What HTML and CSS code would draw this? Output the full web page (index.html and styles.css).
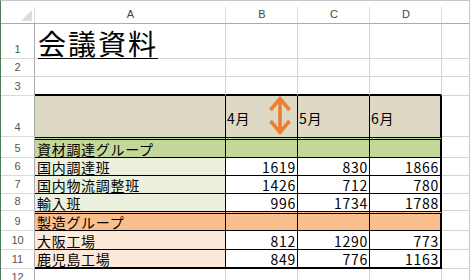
FILE: index.html
```html
<!DOCTYPE html>
<html lang="ja">
<head>
<meta charset="utf-8">
<title>会議資料</title>
<link rel="stylesheet" href="styles.css">
</head>
<body>
<div class="sheet">
  <div class="corner"><svg class="tri" width="33" height="22" viewBox="0 0 33 22"><polygon points="20,20 31,9 31,20" fill="#dcdcdc"/></svg></div>
  <div class="ch">A</div><div class="ch">B</div><div class="ch">C</div><div class="ch">D</div><div class="ch ch-e"></div>

  <div class="rh">1</div>
  <div class="cell title-cell"><span class="title">会議資料</span></div>
  <div class="cell"></div><div class="cell"></div><div class="cell"></div><div class="cell e"></div>

  <div class="rh">2</div>
  <div class="cell"></div><div class="cell"></div><div class="cell"></div><div class="cell"></div><div class="cell e"></div>

  <div class="rh">3</div>
  <div class="cell above"></div><div class="cell above"></div><div class="cell above"></div><div class="cell above"></div><div class="cell e"></div>

  <div class="rh">4</div>
  <div class="t head"></div>
  <div class="t head month host">4月<svg class="arrow" width="22" height="41" viewBox="0 0 22 41"><g fill="none" stroke="#ed7d31" stroke-width="3.6" stroke-linejoin="miter"><polyline points="1.5,15 11,3.5 20.5,15"/><line x1="11" y1="4" x2="11" y2="37"/><polyline points="1.5,26 11,37.5 20.5,26"/></g></svg></div>
  <div class="t head month">5月</div>
  <div class="t head month last">6月</div>
  <div class="cell e"></div>

  <div class="rh">5</div>
  <div class="t grp-g dbl">資材調達グループ</div>
  <div class="t grp-g dbl"></div><div class="t grp-g dbl"></div><div class="t grp-g dbl last"></div>
  <div class="cell e"></div>

  <div class="rh">6</div>
  <div class="t lt-g">国内調達班</div>
  <div class="t num">1619</div><div class="t num">830</div><div class="t num last">1866</div>
  <div class="cell e"></div>

  <div class="rh">7</div>
  <div class="t lt-g">国内物流調整班</div>
  <div class="t num">1426</div><div class="t num">712</div><div class="t num last">780</div>
  <div class="cell e"></div>

  <div class="rh">8</div>
  <div class="t lt-g nob">輸入班</div>
  <div class="t num nob">996</div><div class="t num nob">1734</div><div class="t num nob last">1788</div>
  <div class="cell e"></div>

  <div class="rh">9</div>
  <div class="t grp-o dbl">製造グループ</div>
  <div class="t grp-o dbl"></div><div class="t grp-o dbl"></div><div class="t grp-o dbl last"></div>
  <div class="cell e"></div>

  <div class="rh">10</div>
  <div class="t lt-o">大阪工場</div>
  <div class="t num">812</div><div class="t num">1290</div><div class="t num last">773</div>
  <div class="cell e"></div>

  <div class="rh">11</div>
  <div class="t lt-o bottom">鹿児島工場</div>
  <div class="t num bottom">849</div><div class="t num bottom">776</div><div class="t num bottom last">1163</div>
  <div class="cell e"></div>

  <div class="rh">12</div>
  <div class="cell"></div><div class="cell"></div><div class="cell"></div><div class="cell"></div><div class="cell e"></div>
</div>
</body>
</html>
```

FILE: styles.css
```css
html, body {
  margin: 0;
  padding: 0;
  background: #ffffff;
}

.sheet {
  display: grid;
  grid-template-columns: 34px 191px 72px 72px 72px 27px;
  grid-template-rows: 23px 35px 18px 19px 41px 21px 18px 18px 17px 20px 19px 19px 18px;
  width: 470px;
  height: 280px;
  box-sizing: border-box;
  border-top: 1px solid #c6c6c6;
  border-left: 1px solid #4f7a5c;
  border-right: 1px solid #c6c6c6;
  overflow: hidden;
  background: #ffffff;
  font-family: "Noto Sans CJK JP", sans-serif;
  font-size: 14px;
  letter-spacing: 0.7px;
  color: #000000;
}

.sheet > div {
  box-sizing: border-box;
  min-width: 0;
  white-space: nowrap;
}

/* headers */
.corner,
.ch {
  border-bottom: 1px solid #ababab;
  background: linear-gradient(#dadada, #dadada) right bottom / 1px 16px no-repeat;
}

.tri {
  display: block;
}

.ch {
  display: flex;
  justify-content: center;
  align-items: center;
  padding-top: 3px;
  font-family: "Liberation Sans", Arial, sans-serif;
  font-size: 11px;
  letter-spacing: 0;
  color: #444444;
}

.ch-e {
  background: none;
}

.rh {
  display: flex;
  justify-content: center;
  align-items: flex-end;
  padding-bottom: 3px;
  border-right: 1px solid #ababab;
  border-bottom: 1px solid #dadada;
  font-family: "Liberation Sans", Arial, sans-serif;
  font-size: 11px;
  line-height: 11px;
  letter-spacing: 0;
  color: #555555;
}

/* plain grid cells */
.cell {
  border-right: 1px solid #d4d4d4;
  border-bottom: 1px solid #d4d4d4;
}

.cell.e {
  border-right: none;
}

.cell.above {
  border-bottom: 2px solid #000000;
}

.title-cell {
  display: flex;
  align-items: flex-end;
  padding: 0 0 1px 3px;
}

.title {
  font-size: 28px;
  line-height: 28px;
  letter-spacing: 2px;
  text-decoration: underline;
  text-decoration-thickness: 1px;
  text-underline-offset: 3px;
}

/* table cells */
.t {
  display: flex;
  align-items: flex-end;
  padding: 0 1px 1px 2px;
  line-height: 1;
  border-right: 1px solid #000000;
  border-bottom: 1px solid #000000;
  background: #ffffff;
}

.t.last {
  border-right: 2px solid #000000;
}

.t.head {
  background: #ddd9c4;
  border-bottom: none;
  align-items: center;
  padding: 2px 0 0 1px;
}

.host {
  position: relative;
}

.arrow {
  position: absolute;
  left: 43px;
  top: -1px;
  display: block;
}

.t.dbl {
  border-top: 3px double #000000;
}

.t.nob {
  border-bottom: none;
}

.t.bottom {
  border-bottom: 2px solid #000000;
}

.t.num {
  justify-content: flex-end;
}

.grp-g {
  background: #c4d79b;
}

.t.lt-g {
  background: #ebf1de;
}

.t.grp-o {
  background: #fabf8f;
}

.t.lt-o {
  background: #fde9d9;
}

.t.grp-g {
  background: #c4d79b;
}
```
